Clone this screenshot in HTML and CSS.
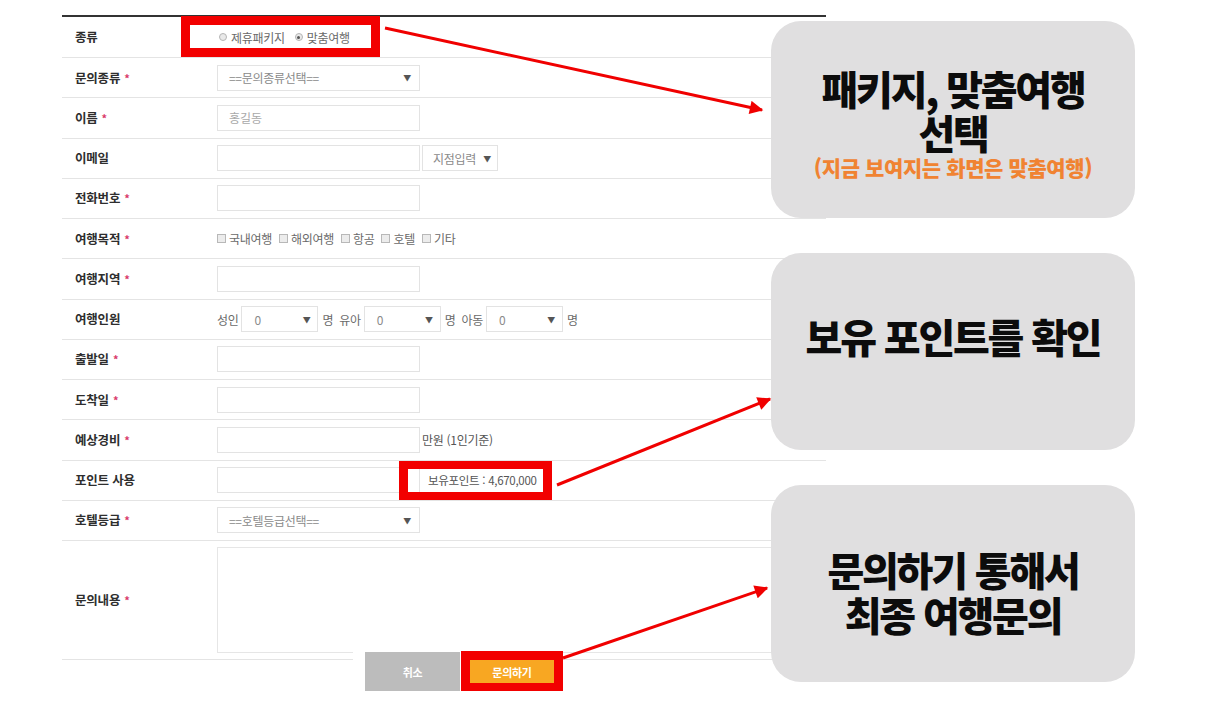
FILE: index.html
```html
<!DOCTYPE html>
<html lang="ko">
<head>
<meta charset="utf-8">
<title>여행문의</title>
<link rel="stylesheet" href="styles.css">
</head>
<body>
<div class="page">
  <form class="form">
    <div class="rows">
      <div class="row row-first">
        <div class="label">종류</div>
        <div class="field radios">
          <span class="opt"><span class="radio"></span>제휴패키지</span>
          <span class="opt"><span class="radio on"></span>맞춤여행</span>
        </div>
      </div>
      <div class="row">
        <div class="label">문의종류<span class="req">*</span></div>
        <div class="field"><div class="select wide"><span>==문의종류선택==</span><span class="caret">▼</span></div></div>
      </div>
      <div class="row">
        <div class="label">이름<span class="req">*</span></div>
        <div class="field"><input class="input" type="text" placeholder="홍길동"></div>
      </div>
      <div class="row">
        <div class="label">이메일</div>
        <div class="field"><input class="input" type="text"><div class="select mail"><span>지점입력</span><span class="caret">▼</span></div></div>
      </div>
      <div class="row">
        <div class="label">전화번호<span class="req">*</span></div>
        <div class="field"><input class="input" type="text"></div>
      </div>
      <div class="row">
        <div class="label">여행목적<span class="req">*</span></div>
        <div class="field checks">
          <span class="opt"><span class="check"></span>국내여행</span>
          <span class="opt"><span class="check"></span>해외여행</span>
          <span class="opt"><span class="check"></span>항공</span>
          <span class="opt"><span class="check"></span>호텔</span>
          <span class="opt"><span class="check"></span>기타</span>
        </div>
      </div>
      <div class="row">
        <div class="label">여행지역<span class="req">*</span></div>
        <div class="field"><input class="input" type="text"></div>
      </div>
      <div class="row">
        <div class="label">여행인원</div>
        <div class="field people">
          <span>성인</span><div class="select small"><span>0</span><span class="caret">▼</span></div><span>명</span>
          <span class="sp">유아</span><div class="select small"><span>0</span><span class="caret">▼</span></div><span>명</span>
          <span class="sp">아동</span><div class="select small"><span>0</span><span class="caret">▼</span></div><span>명</span>
        </div>
      </div>
      <div class="row">
        <div class="label">출발일<span class="req">*</span></div>
        <div class="field"><input class="input" type="text"></div>
      </div>
      <div class="row">
        <div class="label">도착일<span class="req">*</span></div>
        <div class="field"><input class="input" type="text"></div>
      </div>
      <div class="row">
        <div class="label">예상경비<span class="req">*</span></div>
        <div class="field"><input class="input" type="text"><span class="unit">만원 (1인기준)</span></div>
      </div>
      <div class="row">
        <div class="label">포인트 사용</div>
        <div class="field"><input class="input" type="text"><span class="points">보유포인트 : 4,670,000</span></div>
      </div>
      <div class="row">
        <div class="label">호텔등급<span class="req">*</span></div>
        <div class="field"><div class="select wide"><span>==호텔등급선택==</span><span class="caret">▼</span></div></div>
      </div>
      <div class="row row-text">
        <div class="label">문의내용<span class="req">*</span></div>
        <div class="field"><textarea class="textarea"></textarea></div>
      </div>
    </div>
    <div class="actions">
      <button type="button" class="btn btn-cancel">취소</button>
      <span class="mark-submit"><button type="button" class="btn btn-submit">문의하기</button></span>
    </div>
  </form>

  <div class="mark mark-kind"></div>
  <div class="mark mark-point"></div>

  <div class="notes">
    <div class="note note-1">
      <div class="note-title">패키지, 맞춤여행</div>
      <div class="note-title">선택</div>
      <div class="note-sub">(지금 보여지는 화면은 맞춤여행)</div>
    </div>
    <div class="note note-2">
      <div class="note-title">보유 포인트를 확인</div>
    </div>
    <div class="note note-3">
      <div class="note-title">문의하기 통해서</div>
      <div class="note-title">최종 여행문의</div>
    </div>
  </div>

  <svg class="arrows" width="1213" height="701" viewBox="0 0 1213 701">
    <defs>
      <marker id="head" viewBox="0 0 10 10" refX="9" refY="5" markerWidth="5" markerHeight="4.5" orient="auto" markerUnits="strokeWidth">
        <path d="M0 0 L10 5 L0 10 Z" fill="#f00000"/>
      </marker>
    </defs>
    <line x1="385" y1="28" x2="762" y2="110" stroke="#f00000" stroke-width="3" marker-end="url(#head)"/>
    <line x1="557" y1="485" x2="770" y2="399" stroke="#f00000" stroke-width="3" marker-end="url(#head)"/>
    <line x1="563" y1="658" x2="767" y2="588" stroke="#f00000" stroke-width="3" marker-end="url(#head)"/>
  </svg>
</div>
</body>
</html>
```

FILE: styles.css
```css
html, body {
  margin: 0;
  padding: 0;
  background: #ffffff;
}

body {
  font-family: "Noto Sans CJK KR", "Noto Sans", "Liberation Sans", sans-serif;
  color: #333333;
}

.page {
  position: relative;
  width: 1213px;
  height: 701px;
  overflow: hidden;
}

.form {
  margin: 0 0 0 62px;
  width: 764px;
  padding-top: 15px;
}

.rows {
  border-top: 2px solid #333333;
}

.row {
  display: flex;
  align-items: center;
  height: 40.25px;
  box-sizing: border-box;
  border-bottom: 1px solid #e4e4e4;
}

.row-first {
  height: 41px;
}

.row-text {
  height: 119px;
  align-items: flex-start;
}

.row-text .label {
  align-self: center;
}

.label {
  width: 155px;
  flex: none;
  box-sizing: border-box;
  padding-left: 13px;
  font-size: 12.5px;
  font-weight: 700;
  line-height: 16px;
  letter-spacing: -0.2px;
  color: #2e2e2e;
}

.req {
  color: #d93a6a;
  margin-left: 4px;
  font-size: 11px;
}

.field {
  display: flex;
  align-items: center;
  font-size: 12px;
  line-height: 15px;
  color: #6a6a6a;
  letter-spacing: -0.3px;
}

.input {
  width: 203px;
  height: 26px;
  box-sizing: border-box;
  border: 1px solid #e3e3e3;
  margin: 0;
  padding: 0 11px;
  font-family: inherit;
  font-size: 12px;
  color: #555555;
  background: #ffffff;
  outline: none;
}

.input::placeholder {
  color: #a9a9a9;
}

.select {
  height: 26px;
  box-sizing: border-box;
  border: 1px solid #e3e3e3;
  background: #ffffff;
  display: flex;
  align-items: center;
  justify-content: space-between;
  color: #8a8a8a;
}

.select.wide {
  width: 203px;
  padding: 0 8px 0 11px;
}

.select.mail {
  width: 76px;
  margin-left: 2px;
  padding: 0 6px 0 10px;
}

.select.small {
  width: 77px;
  padding: 0 7px 0 12px;
  margin: 0 4px 0 3px;
}

.caret {
  font-size: 8px;
  color: #555555;
}

.radios {
  padding-left: 2px;
  gap: 10px;
}

.radios .opt {
  gap: 4px;
}

.checks {
  gap: 7px;
}

.opt {
  display: inline-flex;
  align-items: center;
  gap: 3px;
}

.radio {
  width: 8px;
  height: 8px;
  border-radius: 50%;
  border: 1px solid #b5b5b5;
  background: #e9e9e9;
  box-sizing: border-box;
  position: relative;
}

.radio.on::after {
  content: "";
  position: absolute;
  left: 1.5px;
  top: 1.5px;
  width: 3px;
  height: 3px;
  border-radius: 50%;
  background: #555555;
}

.check {
  width: 9px;
  height: 9px;
  box-sizing: border-box;
  border: 1px solid #b8b8b8;
  background: #ececec;
}

.people .sp {
  margin-left: 6px;
}

.unit {
  margin-left: 2px;
  color: #555555;
}

.points {
  margin-left: 8px;
  font-size: 11.5px;
  color: #555555;
}

.textarea {
  width: 620px;
  height: 106px;
  margin-top: 6px;
  box-sizing: border-box;
  border: 1px solid #e6e6e6;
  resize: none;
  font-family: inherit;
}

.actions {
  display: flex;
  align-items: flex-end;
  width: fit-content;
  margin: -9px 0 0 291px;
  padding: 0 0 0 12px;
  background: #ffffff;
  position: relative;
}

.btn {
  border: 0;
  margin: 0;
  padding: 0;
  font-family: inherit;
  font-size: 11px;
  font-weight: 700;
  color: #ffffff;
  letter-spacing: -0.3px;
}

.btn-cancel {
  width: 95px;
  height: 39px;
  background: #bcbcbc;
}

.mark-submit {
  display: block;
  margin-left: 1px;
  border: solid #f20000;
  border-width: 9px 9px 8px 9px;
}

.btn-submit {
  display: block;
  width: 84px;
  height: 23px;
  background: #f8a722;
}

.mark {
  position: absolute;
  box-sizing: border-box;
  border: 9px solid #f20000;
}

.mark-kind {
  left: 181px;
  top: 16px;
  width: 199px;
  height: 41px;
}

.mark-point {
  left: 399px;
  top: 461px;
  width: 153px;
  height: 39px;
  border-width: 8px 9px;
}

.notes {
  position: absolute;
  left: 771px;
  top: 21px;
  display: flex;
  flex-direction: column;
  gap: 35px;
}

.note {
  width: 364px;
  height: 197px;
  box-sizing: border-box;
  border-radius: 30px;
  background: #e0dfe0;
  display: flex;
  flex-direction: column;
  align-items: center;
  justify-content: center;
  text-align: center;
}

.note-title {
  font-size: 40px;
  font-weight: 900;
  line-height: 45px;
  height: 45px;
  letter-spacing: -2.2px;
  color: #0c0c0c;
}

.note-sub {
  font-size: 21px;
  font-weight: 900;
  line-height: 24px;
  height: 24px;
  letter-spacing: -0.4px;
  color: #f08332;
}

.note-1 {
  padding-top: 6px;
}

.note-1 .note-title + .note-title {
  margin-top: -1px;
}

.note-2 {
  padding-bottom: 30px;
}

.note-3 {
  padding-top: 16px;
}

.arrows {
  position: absolute;
  left: 0;
  top: 0;
  pointer-events: none;
}
```
